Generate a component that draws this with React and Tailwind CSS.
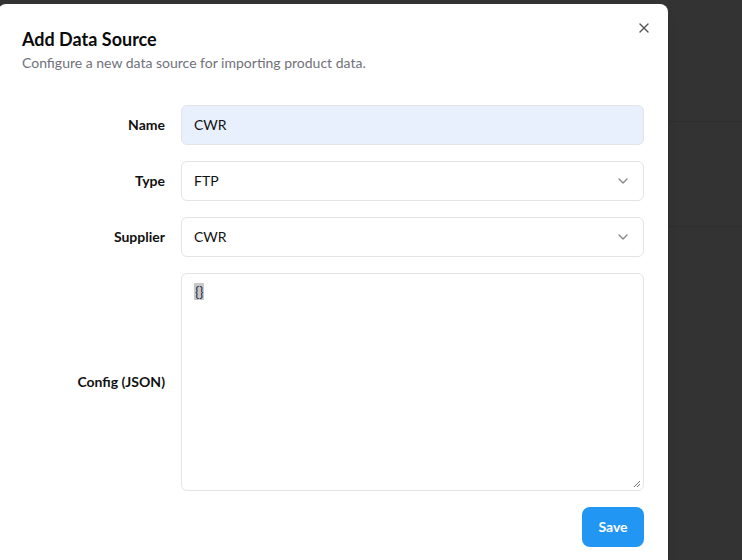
import { X, ChevronDown } from "lucide-react";

const Field = ({ label, children }) => (
  <>
    <label className="text-right text-sm font-bold text-[#111]">{label}</label>
    <div>{children}</div>
  </>
);

const SelectBox = ({ value }) => (
  <div className="flex h-10 w-full items-center justify-between rounded-md border border-[#e4e4e7] bg-white px-3 text-sm text-[#111]">
    <span>{value}</span>
    <ChevronDown size={16} className="text-[#111] opacity-50" />
  </div>
);

export default function App() {
  return (
    <div className="relative h-[560px] w-[742px] overflow-hidden bg-white font-['Lato',sans-serif]">
      {/* page behind the dialog */}
      <div className="-ml-[62px] -mt-[30px]">
        <h1 className="text-[30px] font-bold leading-[34px] text-black">Data Sources</h1>
        <div className="h-[118px] border-b border-gray-200"></div>
        <div className="h-[105px] border-b border-gray-200"></div>
      </div>

      {/* overlay */}
      <div className="absolute inset-0 bg-black/80"></div>

      {/* dialog */}
      <div className="absolute left-[-2px] top-[4px] w-[670px] rounded-lg bg-white px-6 pt-[21px] pb-6 shadow-lg">
        <button className="absolute right-4 top-4 text-[#111] opacity-70">
          <X size={16} />
        </button>

        {/* Header */}
        <div className="flex flex-col">
          <h2 className="text-lg font-bold leading-7 text-[#0a0a0a]">Add Data Source</h2>
          <p className="text-sm leading-5 text-[#71717a]">
            Configure a new data source for importing product data.
          </p>
        </div>

        {/* Form */}
        <div className="mt-8 grid grid-cols-[143px_1fr] items-center gap-4">
          <Field label="Name">
            <div className="flex h-10 w-full items-center rounded-md border border-[#e4e4e7] bg-[#e8f0fe] px-3 text-sm text-[#111]">
              CWR
            </div>
          </Field>
          <Field label="Type">
            <SelectBox value="FTP" />
          </Field>
          <Field label="Supplier">
            <SelectBox value="CWR" />
          </Field>
          <Field label="Config (JSON)">
            <div className="relative h-[218px] w-full rounded-md border border-[#e4e4e7] bg-white px-3 py-2 text-sm leading-5 text-[#1e2a4a]">
              <span className="bg-[#c8c8c8] px-[1px]">{"{}"}</span>
              <svg
                className="absolute bottom-[2px] right-[2px]"
                width="8"
                height="8"
                viewBox="0 0 8 8"
              >
                <path d="M7 1 L1 7 M7 4 L4 7" stroke="#777" strokeWidth="1" />
              </svg>
            </div>
          </Field>
        </div>

        {/* Footer */}
        <div className="mt-4 flex justify-end">
          <button className="h-10 w-[62px] rounded-lg bg-[#2196f3] text-sm font-bold text-white">
            Save
          </button>
        </div>
      </div>
    </div>
  );
}
